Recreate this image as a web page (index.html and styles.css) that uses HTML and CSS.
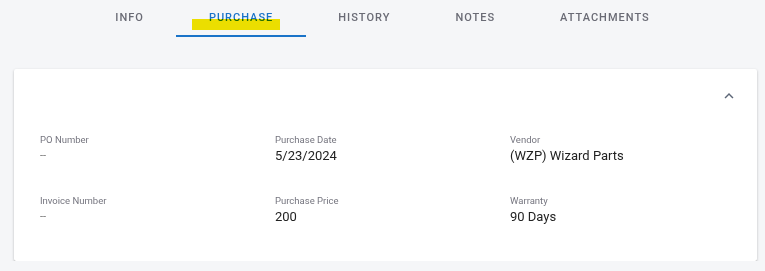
FILE: index.html
```html
<!DOCTYPE html>
<html lang="en">
<head>
    <meta charset="UTF-8">
    <title>Asset - Purchase</title>
    <link rel="stylesheet" href="styles.css">
</head>
<body>
    <nav class="tabs">
        <a class="tab" href="#">Info</a>
        <a class="tab active" href="#">Purchase<span class="marker"></span></a>
        <a class="tab" href="#">History</a>
        <a class="tab" href="#">Notes</a>
        <a class="tab" href="#">Attachments</a>
    </nav>

    <section class="card">
        <div class="card-header">
            <button class="collapse-btn" aria-label="Collapse">
                <svg viewBox="0 0 24 24" width="18" height="18"><path d="M12 8l-6 6 1.41 1.41L12 10.83l4.59 4.58L18 14z"/></svg>
            </button>
        </div>
        <div class="fields">
            <div class="field">
                <div class="label">PO Number</div>
                <div class="value empty">--</div>
            </div>
            <div class="field">
                <div class="label">Purchase Date</div>
                <div class="value">5/23/2024</div>
            </div>
            <div class="field">
                <div class="label">Vendor</div>
                <div class="value">(WZP) Wizard Parts</div>
            </div>
            <div class="field">
                <div class="label">Invoice Number</div>
                <div class="value empty">--</div>
            </div>
            <div class="field">
                <div class="label">Purchase Price</div>
                <div class="value">200</div>
            </div>
            <div class="field">
                <div class="label">Warranty</div>
                <div class="value">90 Days</div>
            </div>
        </div>
    </section>
</body>
</html>
```

FILE: styles.css
```css
body {
    margin: 0;
    background: #f5f6f8;
    font-family: Roboto, "Noto Sans", sans-serif;
    color: #222;
}
.tabs {
    display: flex;
    justify-content: center;
    height: 37px;
}
.tab {
    position: relative;
    display: flex;
    align-items: center;
    padding: 0 32.5px 2px;
    font-size: 11px;
    font-weight: 500;
    letter-spacing: 1px;
    text-transform: uppercase;
    text-decoration: none;
    color: #6a6b75;
}
.tab.active {
    color: #1a73c8;
}
.tab.active::after {
    content: "";
    position: absolute;
    left: 0;
    right: 0;
    bottom: 0;
    height: 2px;
    background: #1a73c8;
}
.marker {
    position: absolute;
    left: 16px;
    top: 19px;
    width: 88px;
    height: 11px;
    background: #f5e600;
    mix-blend-mode: multiply;
}
.card {
    margin: 32px 8px 0 14px;
    background: #fff;
    border-radius: 2px;
    box-shadow: 0 1px 3px rgba(0,0,0,0.2), 0 1px 1px rgba(0,0,0,0.14), 0 2px 1px -1px rgba(0,0,0,0.12);
    padding-bottom: 36px;
}
.card-header {
    display: flex;
    justify-content: flex-end;
    height: 54px;
    padding-right: 19px;
    align-items: center;
}
.collapse-btn {
    border: none;
    background: none;
    padding: 0;
    width: 18px;
    height: 18px;
    fill: #5c6677;
    cursor: pointer;
}
.fields {
    display: grid;
    grid-template-columns: repeat(3, 235px);
    row-gap: 30px;
    padding: 10px 12px 0 26px;
}
.label {
    font-size: 9.5px;
    line-height: 14px;
    color: #75757f;
}
.value {
    font-size: 13px;
    line-height: 17px;
    color: #222;
}
.value.empty {
    font-size: 11px;
    color: #777;
}
```
